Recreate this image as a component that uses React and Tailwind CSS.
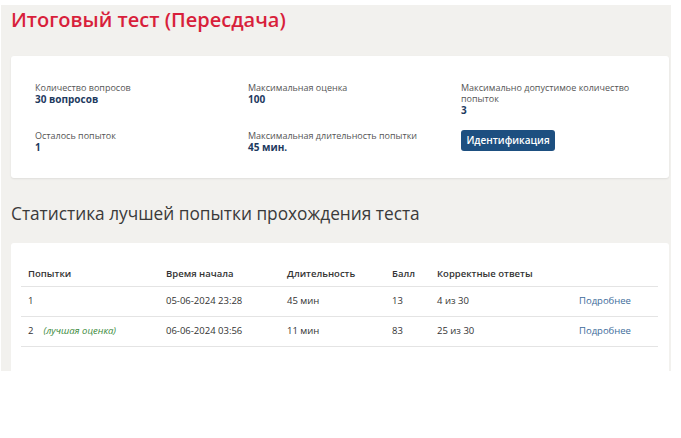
import React from 'react';

const info = [
  { label: 'Количество вопросов', value: '30 вопросов' },
  { label: 'Максимальная оценка', value: '100' },
  { label: 'Максимально допустимое количество попыток', value: '3' },
  { label: 'Осталось попыток', value: '1' },
  { label: 'Максимальная длительность попытки', value: '45 мин.' },
];

const attempts = [
  { n: '1', best: false, start: '05-06-2024 23:28', dur: '45 мин', score: '13', correct: '4 из 30' },
  { n: '2', best: true, start: '06-06-2024 03:56', dur: '11 мин', score: '83', correct: '25 из 30' },
];

function InfoItem({ label, value }) {
  return (
    <div>
      <div className="text-[9px] leading-[11px] text-[#555]">{label}</div>
      <div className="text-[10px] leading-[12px] font-bold text-[#1e3a5f]">{value}</div>
    </div>
  );
}

export default function App() {
  return (
    <div className="h-[438px] w-[681px] bg-white font-['Open_Sans',sans-serif] overflow-hidden">
      <div className="ml-[1px] mt-[5px] w-[670px] h-[366px] bg-[#f2f1ee] pl-[10px] pr-[2px] overflow-hidden">
        <h1 className="pt-[1px] text-[20px] leading-[27px] font-semibold text-[#d81f3b]">
          Итоговый тест (Пересдача)
        </h1>

        {/* test info */}
        <div className="mt-[23px] bg-white rounded-[3px] shadow-[0_1px_2px_rgba(0,0,0,0.08)] pt-[26px] pb-[25px] pl-[24px]">
          <div className="grid grid-cols-[213px_213px_178px] gap-y-[14px]">
            <InfoItem {...info[0]} />
            <InfoItem {...info[1]} />
            <InfoItem {...info[2]} />
            <InfoItem {...info[3]} />
            <InfoItem {...info[4]} />
            <div>
              <button className="block h-[21px] w-[94px] rounded-[3px] bg-[#1d4f80] text-white text-[10px] leading-[21px] font-semibold">
                Идентификация
              </button>
            </div>
          </div>
        </div>

        <h2 className="mt-[23px] text-[17.3px] leading-[25px] text-[#3a3a3a]">
          Статистика лучшей попытки прохождения теста
        </h2>

        {/* attempts */}
        <div className="mt-[17px] bg-white rounded-[3px] pt-[19px] pl-[10px] pr-[11px] pb-[30px]">
          <table className="w-full border-collapse text-[9.5px] text-[#333]">
            <thead>
              <tr className="h-[24px] border-b border-[#e4e4e4] text-left">
                <th className="w-[138px] pl-[7px] font-semibold">Попытки</th>
                <th className="w-[121px] pl-[7px] font-semibold">Время начала</th>
                <th className="w-[105px] pl-[7px] font-semibold">Длительность</th>
                <th className="w-[45px] pl-[7px] font-semibold">Балл</th>
                <th className="w-[142px] pl-[7px] font-semibold">Корректные ответы</th>
                <th className="pl-[7px]"></th>
              </tr>
            </thead>
            <tbody>
              {attempts.map((a) => (
                <tr key={a.n} className="h-[30px] border-b border-[#e4e4e4]">
                  <td className="pl-[7px]">
                    {a.n}
                    {a.best && <span className="ml-[10px] italic text-[#3c8a3c]">(лучшая оценка)</span>}
                  </td>
                  <td className="pl-[7px]">{a.start}</td>
                  <td className="pl-[7px]">{a.dur}</td>
                  <td className="pl-[7px]">{a.score}</td>
                  <td className="pl-[7px]">{a.correct}</td>
                  <td className="pl-[7px] text-[#3d6b9b]">Подробнее</td>
                </tr>
              ))}
            </tbody>
          </table>
        </div>
      </div>
    </div>
  );
}
